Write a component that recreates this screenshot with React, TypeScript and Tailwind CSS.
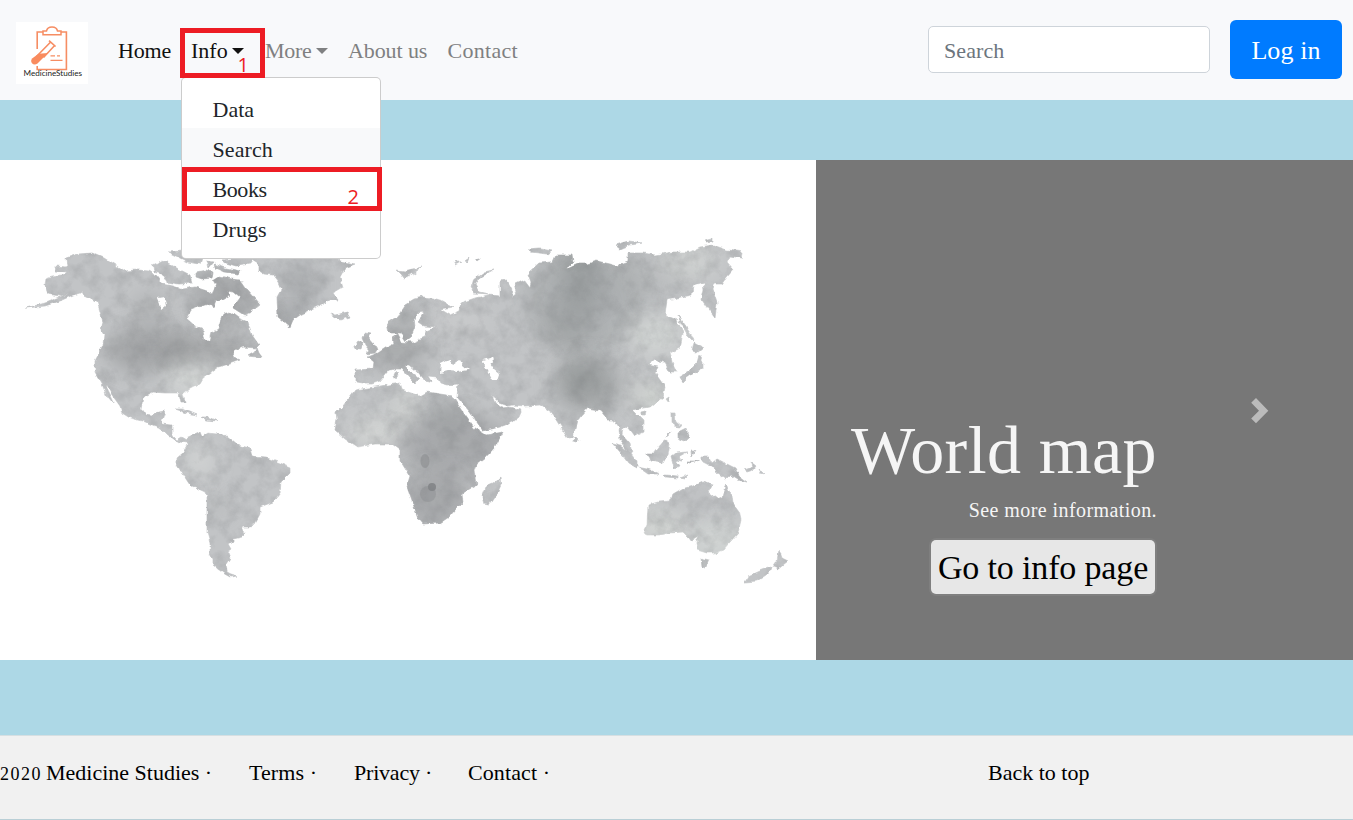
import React from "react";

const LAND: string[] = [
  // North and Central America
  "26,308 45,303 60,297 70,293 60,296 48,294 45,286 46,279 52,277 62,276 67,272 56,271 55,266 67,267 66,258 78,254 92,253 104,258 115,265 124,271 137,270 148,271 157,276 163,284 173,286 182,289 195,287 207,291 212,294 216,286 222,287 230,295 222,300 212,303 206,305 198,307 190,310 186,318 195,326 203,330 205,341 209,341 211,333 218,329 220,322 223,314 230,312 238,318 248,322 252,335 259,345 256,348 244,347 235,351 232,356 240,360 229,364 218,367 210,373 203,378 200,383 190,388 183,394 185,402 181,402 179,393 165,393 153,392 143,397 141,408 146,415 152,416 158,412 165,411 162,420 162,424 172,425 172,435 177,440 182,437 187,440 187,443 178,442 168,435 161,428 150,424 143,421 130,418 122,413 120,406 112,395 107,385 106,388 112,400 113,404 107,397 102,384 95,372 95,360 103,345 104,335 101,330 103,322 99,308 97,302 87,296 80,293 73,295 60,301 45,306",
  // Canadian archipelago
  "153,265 163,260 173,266 190,275 192,283 180,284 167,282 162,274 154,272",
  "168,252 182,251 192,257 202,258 200,264 188,262 176,256",
  "196,272 206,270 213,272 212,278 202,279 196,277",
  "206,261 213,262 208,268",
  "214,264 226,268 240,271 238,274 224,272 215,268",
  "222,260 240,258 252,259 250,264 236,266 226,263",
  "212,281 220,276 232,279 240,280 247,290 254,298 260,305 251,312 244,315 233,308 237,302 240,298 233,292 217,290",
  "210,302 215,302 214,308",
  "248,356 255,352 257,348 259,353 262,357 256,357",
  "103,332 109,336 107,340",
  // Greenland and Iceland
  "250,258 258,263 258,270 264,274 272,275 278,283 281,290 277,297 278,317 284,322 290,327 293,320 300,315 308,311 317,307 330,300 338,300 333,293 343,287 340,277 345,268 355,264 340,261 337,252 300,250 255,252",
  "331,313 336,315 347,312 350,317 340,320 333,317",
  // South America
  "187,438 200,432 202,437 208,433 225,435 237,445 250,448 252,457 267,458 280,463 290,467 290,473 281,482 280,493 273,502 260,507 260,515 255,524 250,527 242,527 245,533 242,536 233,538 233,542 229,545 232,550 228,553 230,558 226,564 227,572 231,574 238,576 230,577 223,573 213,565 213,558 210,553 210,543 207,533 207,497 205,492 190,485 184,476 177,465 177,458 183,453 187,445",
  "175,409 183,409 197,415 190,414 181,411",
  "200,417 208,417 217,421 206,420",
  // Europe and Asia
  "356,370 373,369 374,362 368,357 378,353 387,347 393,344 392,337 397,334 401,342 412,343 424,338 426,331 436,327 424,326 418,322 424,313 421,311 414,318 415,327 411,337 406,341 401,333 389,333 387,323 398,316 406,304 414,299 423,297 433,298 443,301 453,307 440,309 450,315 459,311 461,303 475,298 488,295 500,296 500,281 507,280 513,291 511,297 517,292 515,284 524,280 530,288 531,283 528,275 530,272 540,263 552,262 555,255 572,255 573,262 565,270 578,264 587,264 597,261 610,264 617,266 628,262 628,253 643,253 655,255 673,252 690,252 700,247 713,245 727,250 743,252 742,258 730,256 727,263 733,270 727,277 722,284 714,284 713,290 717,302 715,318 708,309 702,300 704,289 703,282 693,285 692,295 677,298 667,300 665,315 677,320 683,333 680,348 670,353 672,362 677,372 670,372 665,363 658,362 655,359 648,365 658,367 655,373 665,387 663,397 650,407 638,409 633,410 643,420 643,432 635,436 629,428 623,427 622,435 630,444 632,453 627,450 620,440 619,427 614,420 608,420 600,410 588,408 577,421 573,437 568,438 560,425 553,414 550,412 540,405 525,406 513,405 508,406 500,403 492,396 495,403 502,408 510,407 522,410 519,417 513,422 500,427 483,431 470,412 457,397 458,384 447,385 440,383 437,377 428,376 432,383 425,381 418,372 410,365 404,365 412,373 419,379 415,384 409,378 401,369 395,369 388,371 380,381 372,384 362,384 356,383",
  "365,333 370,334 368,338 373,344 379,348 376,353 365,354 370,350 366,345 363,338",
  "353,348 358,341 363,343 361,349",
  "397,270 405,271 422,267 414,273 404,278 401,274",
  "454,262 462,262 456,265", "465,261 470,257 468,262", "474,260 481,258 476,262",
  "493,270 480,277 475,285 479,292 489,294 474,293 471,290 474,279 484,272",
  "528,250 540,249 552,251 548,254 530,252",
  "615,245 628,241 642,243 630,245 620,249",
  "705,240 712,238 712,241 706,242",
  "396,371 398,375 396,379 394,375",
  // Africa and Madagascar
  "355,390 375,387 400,383 402,390 420,396 427,392 440,394 453,396 460,408 467,418 474,428 483,433 486,435 503,432 495,447 486,457 477,464 475,470 477,485 462,493 463,502 455,510 449,517 440,523 423,524 418,518 413,504 407,487 410,477 400,461 400,450 392,444 375,444 357,447 345,439 335,430 337,420 336,413 344,405",
  "500,478 501,485 496,496 490,505 484,504 482,497 486,487 493,484",
  // Japan and the nearby islands
  "678,316 683,322 690,332 694,341 687,334 681,323",
  "694,342 703,347 697,352 692,351",
  "699,355 703,361 703,368 694,373 687,378 683,382 680,376 690,370 697,363",
  "666,399 669,397 669,403", "641,412 646,411 645,415 641,415", "575,436 579,440 577,443 574,442",
  // South-east Asia
  "612,443 620,445 631,453 637,461 637,468 628,463 620,452",
  "638,467 648,469 659,474 648,474",
  "663,475 678,476 678,478 665,477", "680,478 688,475 684,479",
  "647,453 654,453 662,443 666,440 670,443 668,454 663,463 650,461",
  "671,457 676,453 687,452 678,457 683,461 676,460 680,466 674,468",
  "688,461 700,461 690,463", "691,451 695,451 692,456",
  "671,413 675,413 676,423 681,427 674,426 671,421", "678,433 686,429 689,438 685,442 678,439", "665,436 671,430 668,435",
  "702,457 709,457 712,463 717,459 727,464 735,468 739,476 747,482 738,480 730,475 726,479 718,473 712,466 702,461",
  "744,470 753,467 751,462 756,466 753,470 747,472", "758,469 765,474 760,473",
  // Australia and New Zealand
  "648,505 658,502 670,501 673,495 685,488 693,486 702,482 712,485 708,492 717,499 722,497 726,483 729,492 732,495 733,503 739,511 741,520 738,533 730,542 723,550 714,553 707,553 697,550 696,543 699,536 691,541 688,537 683,532 670,533 658,535 647,535 643,533 647,525",
  "701,558 709,560 706,567 702,566",
  "779,549 782,558 788,561 778,569 773,567 777,561",
  "771,567 769,573 757,581 745,582 749,576 760,571",
];

const WATER: string[] = [
  "441,364 449,360 453,365 460,360 463,365 469,370 457,372 448,371 440,373",
  "483,360 493,357 494,361 490,363 495,370 500,374 498,380 492,380 487,371 484,366",
  "158,298 164,297 166,306 161,310 160,303",
];

const TONES: [number, number, number, number, string, number][] = [
  [150, 350, 44, 24, "#8f9193", 0.6],
  [210, 350, 46, 18, "#969899", 0.55],
  [150, 308, 16, 12, "#909293", 0.45],
  [225, 295, 35, 30, "#8f9193", 0.5],
  [190, 378, 28, 12, "#dcdfdd", 0.85],
  [300, 285, 16, 22, "#8f9294", 0.5],
  [288, 318, 14, 8, "#76787a", 0.7],
  [200, 460, 14, 18, "#d8dad9", 0.7],
  [214, 505, 14, 10, "#b0b2b3", 0.6],
  [395, 350, 32, 20, "#96999a", 0.55],
  [407, 317, 18, 12, "#96999a", 0.55],
  [585, 300, 62, 54, "#989c9d", 0.45],
  [582, 280, 22, 34, "#868b8b", 0.45],
  [568, 325, 24, 26, "#8d9191", 0.35],
  [588, 385, 34, 28, "#8c9090", 0.55],
  [582, 378, 18, 16, "#858a8a", 0.45],
  [650, 275, 40, 25, "#a7aaab", 0.3],
  [655, 335, 28, 20, "#d2d5d4", 0.95],
  [650, 397, 18, 14, "#d2d6d2", 0.9],
  [690, 262, 30, 15, "#d5d8d6", 0.7],
  [460, 320, 30, 15, "#cbcccd", 0.7],
  [375, 432, 26, 12, "#d8dad8", 0.9],
  [405, 408, 14, 22, "#d1d4d2", 0.8],
  [455, 445, 56, 32, "#97999b", 0.6],
  [448, 415, 20, 16, "#8c9091", 0.45],
  [435, 500, 38, 30, "#97999b", 0.6],
  [660, 525, 28, 16, "#d8dbd8", 0.8],
  [715, 540, 28, 20, "#d4d8d6", 0.8],
  [690, 500, 34, 12, "#bdbfc1", 0.6],
];

function WorldMap() {
  return (
    <svg className="block h-[500px] w-[816px]" viewBox="0 160 816 500" role="img" aria-label="World map">
      <defs>
        <filter id="coast" x="0" y="160" width="816" height="500" filterUnits="userSpaceOnUse" colorInterpolationFilters="sRGB">
          <feTurbulence type="fractalNoise" baseFrequency="0.15" numOctaves="2" seed="7" result="n" />
          <feDisplacementMap in="SourceGraphic" in2="n" scale="5" xChannelSelector="R" yChannelSelector="G" result="d" />
          <feGaussianBlur in="d" stdDeviation="0.55" />
        </filter>
        <filter id="soften" x="-80%" y="-80%" width="260%" height="260%">
          <feGaussianBlur stdDeviation="10" />
        </filter>
        <filter id="paper" x="0" y="160" width="816" height="500" filterUnits="userSpaceOnUse" colorInterpolationFilters="sRGB">
          <feTurbulence type="fractalNoise" baseFrequency="0.07" numOctaves="5" seed="21" />
          <feColorMatrix type="matrix" values="0 0 0 0 0.48  0 0 0 0 0.49  0 0 0 0 0.5  1.6 0 0 0 -0.6" />
        </filter>
        <mask id="land" x="0" y="160" width="816" height="500" maskUnits="userSpaceOnUse">
          <g filter="url(#coast)">
            {LAND.map((p) => (
              <polygon key={p} points={p} fill="#fff" stroke="#fff" strokeWidth="0.6" />
            ))}
            {WATER.map((p) => (
              <polygon key={p} points={p} fill="#000" />
            ))}
          </g>
        </mask>
      </defs>
      <g mask="url(#land)">
        <rect x="0" y="160" width="816" height="500" fill="#c2c4c6" />
        {TONES.map(([cx, cy, rx, ry, fill, o]) => (
          <ellipse key={`${cx}-${cy}`} cx={cx} cy={cy} rx={rx} ry={ry} fill={fill} opacity={o} filter="url(#soften)" />
        ))}
        <ellipse cx="425" cy="461" rx="4.5" ry="7" fill="#858789" opacity="0.5" />
        <circle cx="432" cy="487" r="4" fill="#707274" opacity="0.6" />
        <circle cx="428" cy="494" r="8" fill="#858789" opacity="0.35" />
        <rect x="0" y="160" width="816" height="500" filter="url(#paper)" opacity="0.32" />
      </g>
    </svg>
  );
}

function Logo() {
  return (
    <svg className="block h-[62px] w-[72px] shrink-0" viewBox="16 22 72 62">
      <rect x="16" y="22" width="72" height="62" fill="#fff" />
      <g fill="none" stroke="#f68d63" strokeWidth="1.6">
        <path d="M43 32H37.2V49M37.2 66V69.5H66.4V32H61" />
        <path d="M43 34.7V31H46.5C47 28.4 49.4 27 52 27S57 28.4 57.5 31H61V34.7Z" strokeWidth="1.5" />
        <path d="M49 40.6L55.6 46.5M50.4 42.2L36.5 56.5M54.4 45.8L43.5 57.5" />
        <path d="M50.5 55.8H55M50.5 60.3H62.5M57 55.8H60" strokeWidth="1.2" />
      </g>
      <path d="M38.6 53.8L48 53L37.5 63.4C35.6 65 33.4 64.8 32 63.3C30.7 61.8 30.9 59.8 32.4 58.3Z" fill="#f98b5e" />
      <text x="23.5" y="76" textLength="58.5" lengthAdjust="spacingAndGlyphs" fontFamily="Lato, sans-serif" fontSize="7.8" fill="#222">MedicineStudies</text>
    </svg>
  );
}

function Caret() {
  return <span className="-mt-px h-0 w-0 border-x-[6px] border-t-[6px] border-x-transparent border-t-current" />;
}

const MENU = [
  { label: "Data", style: "tracking-[0px]" },
  { label: "Search", style: "bg-[#f8f9fa] tracking-[0.1px]" },
  { label: "Books", style: "tracking-[-0.4px]" },
  { label: "Drugs", style: "tracking-[0.1px]" },
];

export default function App() {
  return (
    <div className="flex h-[820px] w-[1353px] flex-col overflow-hidden bg-[#add8e6] font-['Liberation_Serif',serif] text-[22px] leading-[30px] text-black">
      <header className="flex h-[100px] shrink-0 items-center bg-[#f8f9fb] pl-4 pr-[11px]">
        <div className="pt-[6px]"><Logo /></div>
        <nav className="flex flex-1 items-center whitespace-nowrap pl-[30px] pt-[2px] text-[#7f8081]">
          <a className="w-[73px] tracking-[-0.2px] text-[#111]">Home</a>
          <div className="relative w-[74px] text-[#111]">
            <a className="flex items-center gap-[4px]">Info<Caret /></a>
            <ul className="absolute -left-[10px] top-[41px] z-10 h-[182px] w-[200px] rounded-[5px] border border-black/20 bg-white py-[10px] text-[#212529]">
              {MENU.map((m) => (
                <li key={m.label} className={`h-10 pl-[30.5px] pt-[7px] ${m.style}`}>{m.label}</li>
              ))}
              <li className="absolute left-0 top-[89px] flex h-[44px] w-[200px] justify-end border-[5px] border-[#ed1c24] pr-[18px] pt-[11px] font-['Open_Sans',sans-serif] text-[20px] leading-[28px] text-[#ed1c24]">2</li>
            </ul>
            <span className="absolute -left-[11px] -top-[8px] z-20 flex h-[50px] w-[85px] justify-end border-[5px] border-[#ed1c24] pr-[11px] pt-[18px] font-['Open_Sans',sans-serif] text-[20px] leading-[28px] text-[#ed1c24]">1</span>
          </div>
          <a className="flex w-[83px] items-center gap-[5px] tracking-[-0.3px]">More<Caret /></a>
          <a className="w-[99.5px] tracking-[-0.1px]">About us</a>
          <a className="tracking-[0.3px]">Contact</a>
        </nav>
        <input
          placeholder="Search"
          className="mb-[2px] mr-5 h-[47px] w-[282px] rounded-[5px] border border-[#ced4da] bg-white px-[15px] pt-[4px] tracking-[0.1px] outline-none placeholder:text-[#6c757d]"
        />
        <button className="mb-[2px] h-[59px] w-[112px] rounded-[6px] bg-[#007bff] pt-[4px] text-[26px] tracking-[0.1px] text-white">Log in</button>
      </header>

      <main className="mt-[60px] flex h-[500px] shrink-0 bg-white">
        <WorldMap />
        <section className="flex flex-1 bg-[#777]">
          <div className="flex w-[341px] flex-col items-end whitespace-nowrap pt-[250px] text-[#f5f5f5]">
            <h1 className="text-[68px] leading-[80px] tracking-[0.4px]">World map</h1>
            <p className="mt-[5px] text-[20px] leading-[30px] tracking-[0.42px]">See more information.</p>
            <button className="mr-[2px] mt-[15px] h-[54px] w-[224px] rounded-[5px] bg-[#e7e7e7] pt-[2px] text-[34px] leading-[50px] tracking-[-0.15px] text-black shadow-[0_0_0_2px_rgba(255,255,255,0.06)]">Go to info page</button>
          </div>
          <svg className="ml-[94px] mt-[238px] h-[26px] w-[18px]" viewBox="0 0 18 26">
            <path d="M5 0L17.3 12.7L5 25.3L0.2 20.5L8 12.7L0.2 4.8Z" fill="#bbb" />
          </svg>
        </section>
      </main>

      <footer className="mt-[75px] flex h-[84px] shrink-0 items-start whitespace-nowrap border-t border-[#d6dfe2] bg-[#f1f1f1] pt-[22px]">
        <a className="w-[249px]">
          <span className="mr-[4px] text-[18px] tracking-[1.5px]">2020</span>
          Medicine Studies ·
        </a>
        <a className="w-[105px] tracking-[0.1px]">Terms ·</a>
        <a className="w-[114px] tracking-[-0.2px]">Privacy ·</a>
        <a className="w-[520px] tracking-[0.1px]">Contact ·</a>
        <a>Back to top</a>
      </footer>
      <div className="h-px shrink-0 bg-[#b9cfd6]" />
    </div>
  );
}
